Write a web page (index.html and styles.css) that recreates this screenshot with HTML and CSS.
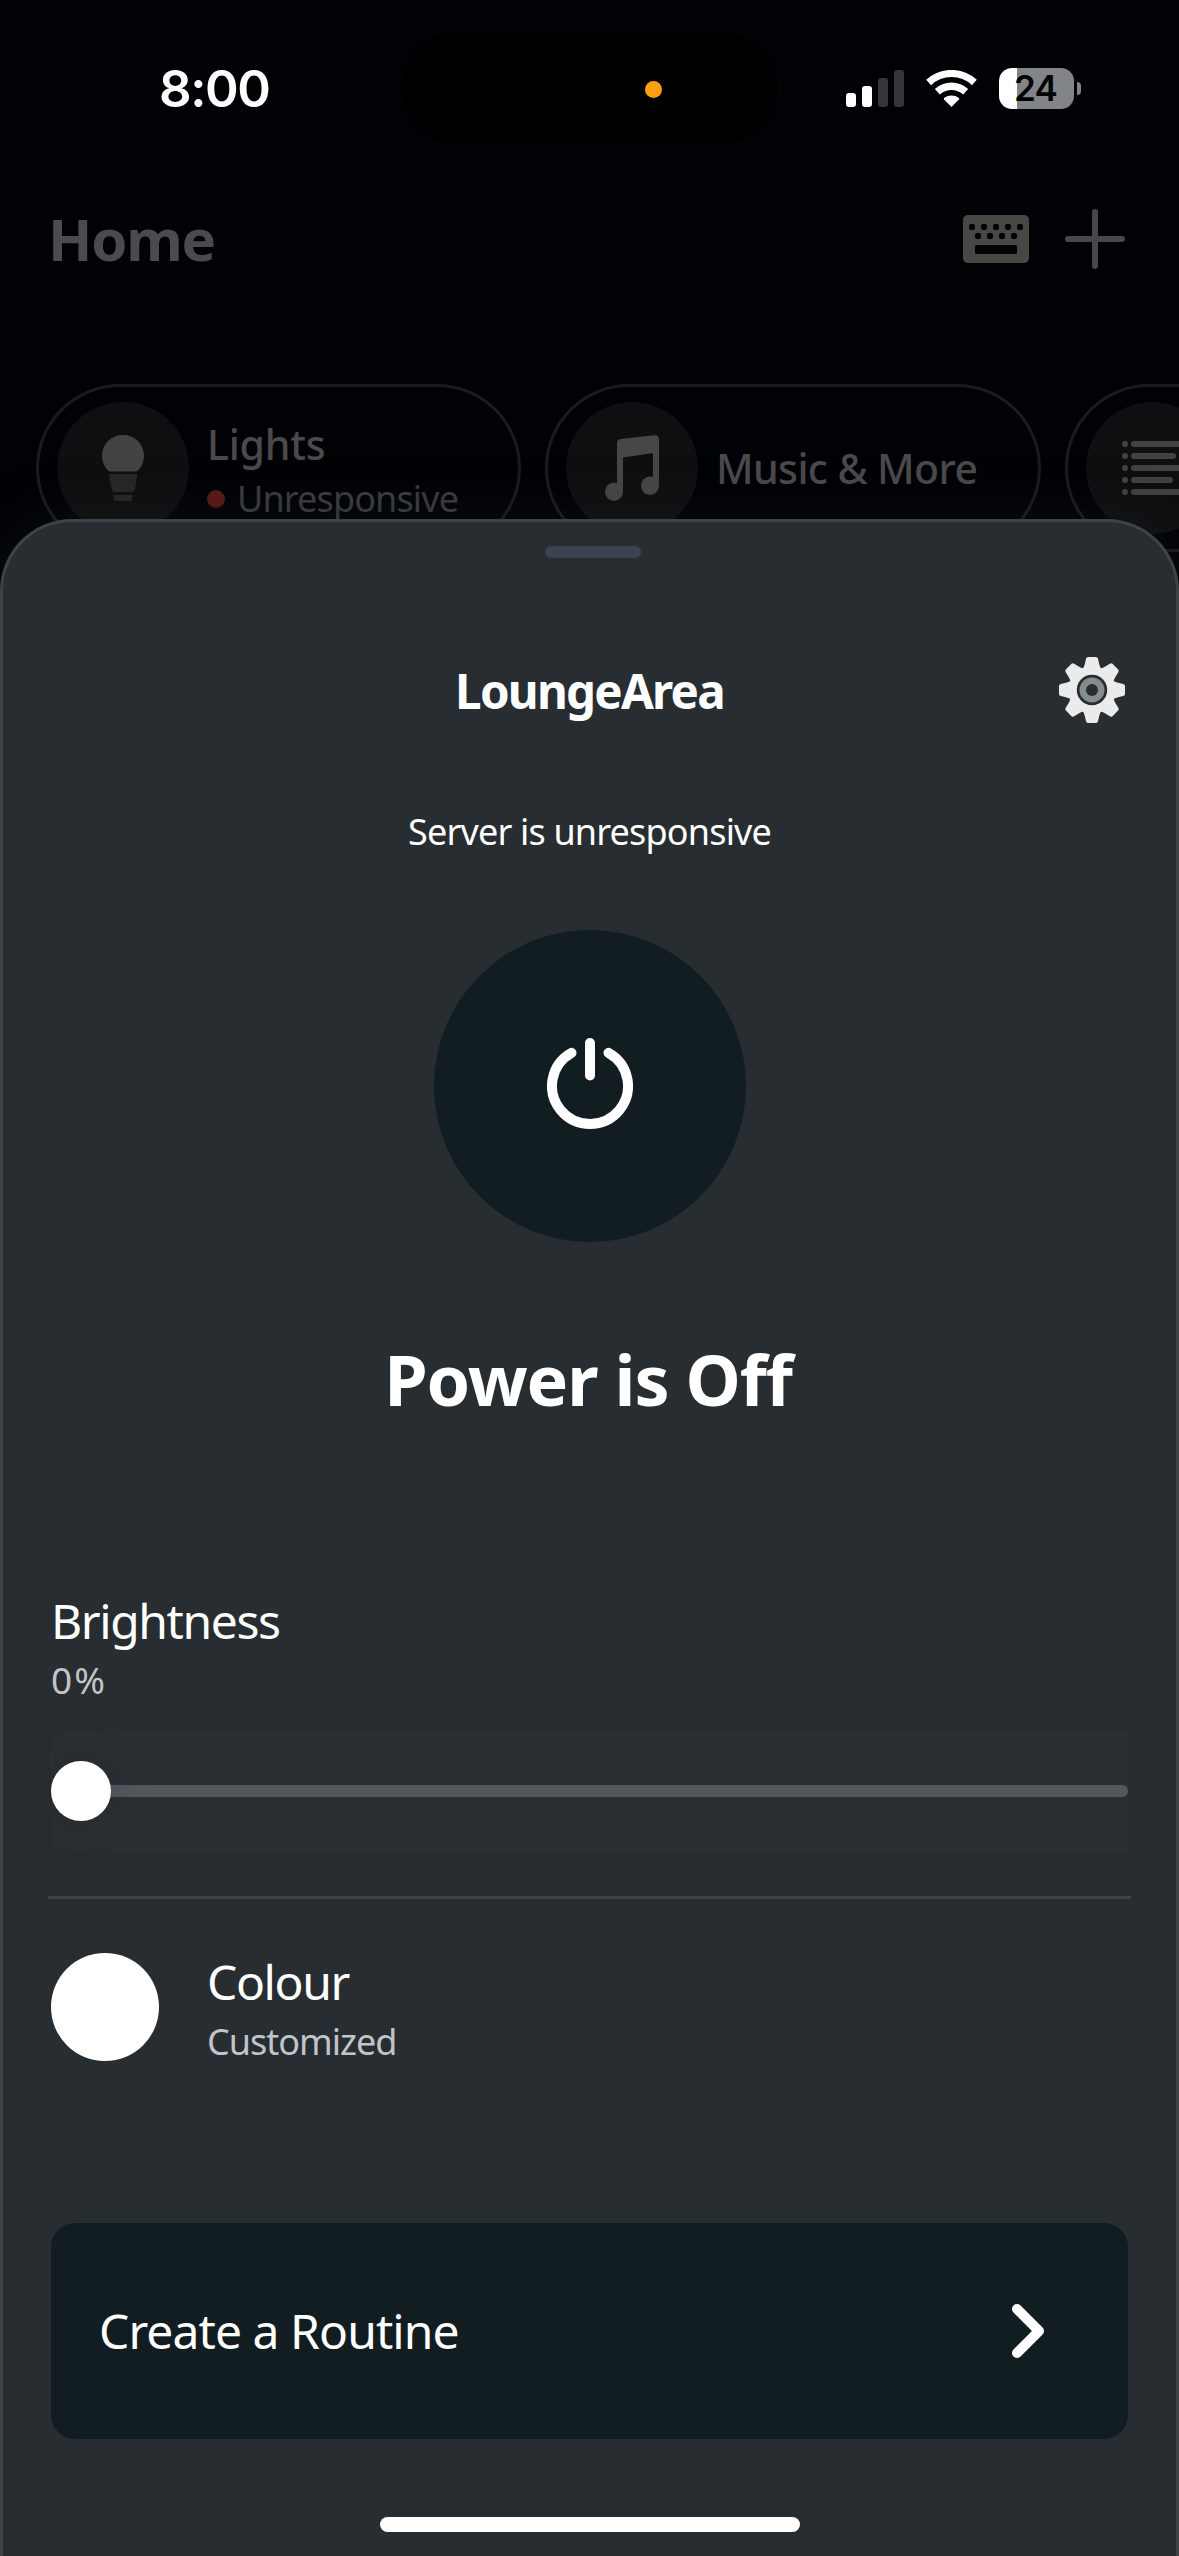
FILE: index.html
```html
<!DOCTYPE html>
<html lang="en">
<head>
<meta charset="utf-8">
<title>LoungeArea</title>
<link rel="stylesheet" href="styles.css">
</head>
<body>
<div class="screen">
  <div class="island"><span class="mic-dot"></span></div>

  <div class="status-bar">
    <span class="time">8:00</span>
    <div class="indicators">
      <svg class="signal" viewBox="0 0 58 37">
        <rect x="0" y="23" width="10" height="14" rx="3" fill="#fff"/>
        <rect x="16" y="16" width="10" height="21" rx="3" fill="#fff"/>
        <rect x="32" y="8" width="10" height="29" rx="3" fill="#343538"/>
        <rect x="48" y="0" width="10" height="37" rx="3" fill="#343538"/>
      </svg>
      <svg class="wifi" viewBox="-25.5 -37 51 37">
        <path d="M-22.85 -24.5A33.5 33.5 0 0 1 22.85 -24.5" fill="none" stroke="#fff" stroke-width="7.2"/>
        <path d="M-14.15 -15.2A20.75 20.75 0 0 1 14.15 -15.2" fill="none" stroke="#fff" stroke-width="7.4"/>
        <path d="M0 0L-7.6 -7.7Q-7.9 -8.5 -7.2 -9.2A12 12 0 0 1 7.2 -9.2Q7.9 -8.5 7.6 -7.7Z" fill="#fff"/>
      </svg>
      <div class="battery"><span class="battery-level">24</span></div>
      <span class="battery-cap"></span>
    </div>
  </div>

  <header class="page-header">
    <h1>Home</h1>
    <svg class="keyboard" viewBox="0 0 66 48">
      <rect width="66" height="48" rx="5" fill="#474745"/>
      <g fill="#000205">
        <rect x="6" y="9" width="6" height="6" rx="2"/><rect x="18" y="9" width="6" height="6" rx="2"/><rect x="30" y="9" width="6" height="6" rx="2"/><rect x="42" y="9" width="6" height="6" rx="2"/><rect x="54" y="9" width="6" height="6" rx="2"/>
        <rect x="12" y="18" width="6" height="6" rx="2"/><rect x="24" y="18" width="6" height="6" rx="2"/><rect x="36" y="18" width="6" height="6" rx="2"/><rect x="48" y="18" width="6" height="6" rx="2"/>
        <rect x="12" y="30" width="42" height="9" rx="1.5"/>
      </g>
    </svg>
    <svg class="plus" viewBox="0 0 60 60"><path d="M30 3V57M3 30H57" stroke="#48484a" stroke-width="6" stroke-linecap="round"/></svg>
  </header>

  <div class="chips">
    <div class="chip chip-lights">
      <div class="chip-icon">
        <svg width="42" height="66" viewBox="0 0 42 66">
          <path d="M6.5 36A21 21 0 1 1 35.500 36Q34.500 36.500 33 36.500H9Q7.500 36.500 6.500 36Z" fill="#434343"/>
          <path d="M7 39H35.500L33 54.500Q32.500 57 30 57H12.500Q10 57 9.500 54.500Z" fill="#262728"/>
          <path d="M11 60H31L30 64.500Q29.700 66 28 66H14Q12.300 66 12 64.500Z" fill="#262728"/>
        </svg>
      </div>
      <div class="chip-lines">
        <span class="chip-title lights-title">Lights</span>
        <span class="chip-sub"><i class="alert-dot"></i>Unresponsive</span>
      </div>
    </div>
    <div class="chip chip-music">
      <div class="chip-icon">
        <svg width="54" height="66" viewBox="0 0 54 66">
          <path d="M12 48V8Q12 4.500 15.500 4L49 0.200Q54 -0.300 54 5V50H48V18L18 22.500V57H12Z" fill="#474747"/>
          <ellipse cx="9" cy="56.800" rx="9" ry="9.200" fill="#474747"/>
          <ellipse cx="45" cy="50.800" rx="9" ry="9.200" fill="#474747"/>
        </svg>
      </div>
      <span class="chip-title">Music &amp; More</span>
    </div>
    <div class="chip chip-list">
      <div class="chip-icon">
        <svg width="60" height="54" viewBox="0 0 60 54">
          <g fill="#424242">
            <circle cx="3" cy="3" r="3"/><circle cx="3" cy="15" r="3"/><circle cx="3" cy="27" r="3"/><circle cx="3" cy="39" r="3"/><circle cx="3" cy="51" r="3"/>
            <rect x="9" y="0" width="51" height="6" rx="3"/><rect x="9" y="12" width="45" height="6" rx="3"/><rect x="9" y="24" width="51" height="6" rx="3"/><rect x="9" y="36" width="42" height="6" rx="3"/><rect x="9" y="48" width="51" height="6" rx="3"/>
          </g>
        </svg>
      </div>
    </div>
  </div>

  <section class="sheet">
    <div class="handle"></div>
    <div class="sheet-header">
      <h2>LoungeArea</h2>
      <svg class="gear" viewBox="-33 -33 66 66">
        <defs><path id="tooth" d="M-10 -20Q-7.800 -23 -7.200 -26L-6 -31.200Q-5.600 -33 -4 -33H4Q5.600 -33 6 -31.200L7.200 -26Q7.800 -23 10 -20Z"/></defs>
        <g fill="#ebebeb">
          <circle r="23.500"/>
          <use href="#tooth"/><use href="#tooth" transform="rotate(45)"/><use href="#tooth" transform="rotate(90)"/><use href="#tooth" transform="rotate(135)"/><use href="#tooth" transform="rotate(180)"/><use href="#tooth" transform="rotate(225)"/><use href="#tooth" transform="rotate(270)"/><use href="#tooth" transform="rotate(315)"/>
        </g>
        <circle r="15.200" fill="#282d31"/>
        <circle r="12.500" fill="#868b8e"/>
        <circle r="6" fill="#282d31"/>
      </svg>
    </div>
    <p class="server-note">Server is unresponsive</p>
    <div class="power-button">
      <svg width="86" height="92" viewBox="-43 -49 86 92">
        <path d="M-18.500 -33.200A38 38 0 1 0 18.500 -33.200M0 -43V-10.500" fill="none" stroke="#fff" stroke-width="10" stroke-linecap="round"/>
      </svg>
    </div>
    <p class="power-state">Power is Off</p>

    <div class="brightness">
      <div class="row-title">Brightness</div>
      <div class="row-sub percent">0%</div>
      <div class="slider"><span class="thumb"></span><span class="track"></span></div>
    </div>
    <div class="divider"></div>
    <div class="colour-row">
      <span class="swatch"></span>
      <div class="colour-lines">
        <div class="row-title colour-title">Colour</div>
        <div class="row-sub">Customized</div>
      </div>
    </div>
    <div class="routine">
      <span>Create a Routine</span>
      <svg width="32" height="54" viewBox="0 0 32 54"><path d="M5 5L27 27L5 49" fill="none" stroke="#fff" stroke-width="10" stroke-linecap="round" stroke-linejoin="round"/></svg>
    </div>
    <div class="home-indicator"></div>
  </section>
</div>
</body>
</html>
```
FILE: styles.css
```css
* { box-sizing: border-box; }
html, body { margin: 0; padding: 0; background: #000205; }
h1, h2, p { margin: 0; }
svg { display: block; flex: none; }

.screen {
  position: relative;
  width: 1179px;
  height: 2556px;
  overflow: hidden;
  background: #000205;
  color: #fff;
  font-family: "Noto Sans", sans-serif;
}

/* Status bar */
.island {
  position: absolute;
  left: 402px;
  top: 33px;
  width: 375px;
  height: 110px;
  border-radius: 55px;
  background: #000;
}
.mic-dot {
  position: absolute;
  left: 243px;
  top: 48px;
  width: 17px;
  height: 17px;
  border-radius: 50%;
  background: #fd9f0f;
}
.status-bar {
  display: flex;
  align-items: center;
  justify-content: space-between;
  height: 176px;
  padding: 0 98px 0 159px;
  font-family: Inter, sans-serif;
}
.time {
  font-size: 51px;
  font-weight: 600;
  letter-spacing: -1.4px;
}
.indicators { display: flex; align-items: center; }
.signal { width: 58px; height: 37px; }
.wifi { width: 51px; height: 37px; margin-left: 22px; }
.battery {
  width: 75px;
  height: 41px;
  margin-left: 22px;
  border-radius: 13px;
  background: linear-gradient(90deg, #fff 18px, #838488 18px);
  text-align: center;
}
.battery-level {
  display: block;
  padding-right: 2px;
  color: #000205;
  font-size: 35px;
  font-weight: 600;
  line-height: 41px;
  letter-spacing: -0.8px;
}
.battery-cap {
  width: 4px;
  height: 13px;
  margin-left: 3px;
  border-radius: 0 4px 4px 0;
  background: #838488;
}

/* Page behind the sheet */
.page-header {
  display: flex;
  align-items: center;
  height: 126px;
  padding: 0 54px 0 48px;
}
.page-header h1 {
  flex: 1;
  padding-bottom: 1px;
  color: #4c4a4c;
  font-size: 58px;
  font-weight: 700;
  line-height: 80px;
  letter-spacing: -1.2px;
}
.keyboard { width: 66px; height: 48px; }
.plus { width: 60px; height: 60px; margin-left: 36px; }

.chips {
  display: flex;
  gap: 24px;
  margin-top: 82px;
  padding-left: 36px;
}
.chip {
  display: flex;
  flex: none;
  align-items: center;
  gap: 18px;
  height: 168px;
  padding-left: 18px;
  border: 3px solid #1a1b1e;
  border-radius: 84px;
}
.chip-lights { width: 485px; }
.chip-music { width: 496px; }
.chip-list { width: 485px; }
.chip-icon {
  display: flex;
  align-items: center;
  justify-content: center;
  width: 132px;
  height: 132px;
  border-radius: 50%;
  background: #0e0f10;
}
.chip-lines { display: flex; flex-direction: column; padding-top: 5px; }
.chip-title {
  color: #4a4a4c;
  font-size: 41px;
  font-weight: 500;
  line-height: 56px;
  letter-spacing: -0.62px;
}
.lights-title { letter-spacing: -0.2px; }
.chip-sub {
  display: flex;
  align-items: center;
  color: #3b3c3f;
  font-size: 36px;
  line-height: 54px;
  letter-spacing: -0.87px;
}
.alert-dot {
  width: 18px;
  height: 18px;
  margin-right: 12px;
  border-radius: 50%;
  background: #5b1919;
}

/* Device sheet */
.sheet {
  position: absolute;
  top: 519px;
  left: 0;
  right: 0;
  bottom: 0;
  display: flex;
  flex-direction: column;
  padding: 0 48px;
  border: 3px solid #3f4347;
  border-bottom: 0;
  border-radius: 72px 72px 0 0;
  background: #282d31;
  box-shadow: 0 0 60px rgba(40, 45, 49, 0.3);
}
.handle {
  align-self: center;
  flex: none;
  width: 96px;
  height: 12px;
  margin: 24px 0 0 7px;
  border-radius: 6px;
  background: #3c424e;
}
.sheet-header {
  display: grid;
  flex: none;
  grid-template-columns: 1fr auto 1fr;
  align-items: center;
  height: 132px;
  margin-top: 66px;
}
.sheet-header h2 {
  grid-column: 2;
  padding-top: 2px;
  font-size: 47.500px;
  font-weight: 700;
  line-height: 66px;
  letter-spacing: -1.75px;
}
.gear { justify-self: end; width: 66px; height: 66px; margin-right: 3px; }
.server-note {
  margin-top: 49px;
  text-align: center;
  font-size: 36px;
  line-height: 54px;
  letter-spacing: -0.82px;
}
.power-button {
  display: flex;
  flex: none;
  align-self: center;
  align-items: center;
  justify-content: center;
  width: 312px;
  height: 312px;
  margin-top: 71px;
  padding-bottom: 6px;
  border-radius: 50%;
  background: #121d22;
}
.power-state {
  margin-top: 89px;
  padding-right: 3px;
  text-align: center;
  font-size: 70px;
  font-weight: 700;
  line-height: 96px;
  letter-spacing: -1.1px;
}
.brightness { margin-top: 161px; }
.row-title {
  font-size: 48px;
  line-height: 66px;
  letter-spacing: -1.4px;
}
.row-sub {
  color: #c1c4c8;
  font-size: 36px;
  line-height: 56px;
  letter-spacing: -1px;
}
.percent { line-height: 52px; font-size: 37px; letter-spacing: 2px; }
.slider {
  display: flex;
  align-items: center;
  height: 120px;
  margin-top: 25px;
  background: #2a2f33;
}
.thumb {
  position: relative;
  z-index: 1;
  flex: none;
  width: 60px;
  height: 60px;
  border-radius: 50%;
  background: #fff;
  box-shadow: 0 0 36px rgba(30, 36, 48, 0.3);
}
.track {
  flex: 1;
  height: 12px;
  margin-left: -10px;
  border-radius: 0 6px 6px 0;
  background: #54585d;
}
.divider {
  flex: none;
  height: 3px;
  margin: 45px -3px 0;
  background: #3e4347;
}
.colour-row {
  display: flex;
  flex: none;
  align-items: center;
  height: 108px;
  margin-top: 54px;
}
.swatch {
  width: 108px;
  height: 108px;
  border-radius: 50%;
  background: #fff;
}
.colour-lines { margin-left: 48px; padding-top: 6px; }
.colour-title { line-height: 64px; }
.routine {
  display: flex;
  flex: none;
  align-items: center;
  justify-content: space-between;
  height: 216px;
  margin-top: 162px;
  padding: 0 84px 2px 48px;
  border-radius: 24px;
  background: #121d22;
  font-size: 48px;
  letter-spacing: -0.93px;
}
.routine svg { margin-top: 2px; }
.home-indicator {
  align-self: center;
  flex: none;
  width: 420px;
  height: 15px;
  margin-top: 78px;
  border-radius: 8px;
  background: #fff;
}
```
